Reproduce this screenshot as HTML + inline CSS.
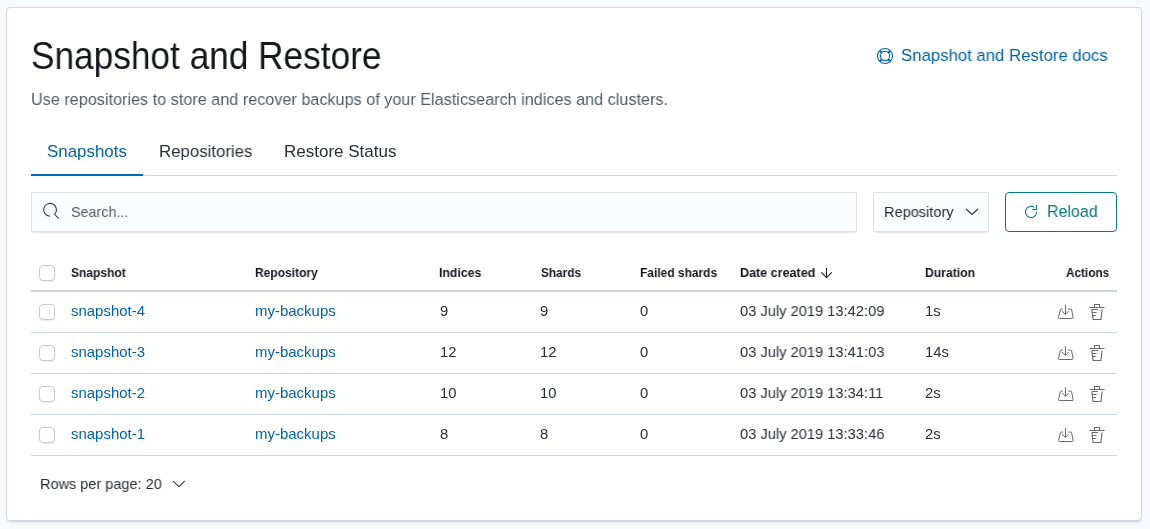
<!DOCTYPE html>
<html><head><meta charset="utf-8"><style>
html,body{margin:0;padding:0;}
body{width:1150px;height:529px;background:#F7F9FD;position:relative;overflow:hidden;font-family:"Liberation Sans",sans-serif;}
.panel{position:absolute;left:6px;top:7px;width:1134px;height:512px;background:#fff;border:1px solid #CFD7E4;border-radius:4px;box-shadow:0 1px 2px -1px rgba(152,162,179,.4),0 3px 3px -2px rgba(152,162,179,.4);}
.t{position:absolute;white-space:nowrap;line-height:40px;height:40px;transform-origin:0 0;will-change:transform;}
.cb{position:absolute;left:39px;width:14px;height:14px;border:1px solid #C9CBCD;border-radius:4px;background:#fff;box-shadow:0 1px 1px rgba(0,0,0,.08);}
.hl{position:absolute;left:31px;width:1086px;height:1px;background:#CFD7E4;}
.ic{position:absolute;}
.field{position:absolute;background:#FBFCFD;box-shadow:inset 0 0 0 1px rgba(0,0,0,.1),0 1px 1px -1px rgba(0,0,0,.1),0 3px 2px -2px rgba(0,0,0,.1);}
</style></head><body>
<div class="panel"></div>
<div class="hl" style="top:175px"></div>
<div style="position:absolute;left:31px;top:174px;width:112px;height:2px;background:#006BB4"></div>
<div class="field" style="left:31px;top:192px;width:826px;height:40px"></div>
<svg class="ic" style="left:42px;top:202px" width="18" height="18" viewBox="0 0 18 18"><path d="M8.05 14.2A6.4 6.4 0 1 1 12.58 12.33L16.9 16.65" fill="none" stroke="#343741" stroke-width="1.05"/></svg>
<div class="field" style="left:873px;top:192px;width:116px;height:40px"></div>
<svg class="ic" style="left:965px;top:208px" width="14" height="8" viewBox="0 0 14 8"><path d="M1 1l6 5.5L13 1" fill="none" stroke="#343741" stroke-width="1.2"/></svg>
<div style="position:absolute;left:1005px;top:192px;width:110px;height:38px;border:1px solid #017D73;border-radius:4px"></div>
<svg class="ic" style="left:1023px;top:204px" width="16" height="16" viewBox="0 0 16 16"><path d="M13.6 7.6A5.6 5.6 0 1 1 11.37 3.43" fill="none" stroke="#017D73" stroke-width="1.05"/><path d="M13.4 1v4.5H9.3" fill="none" stroke="#017D73" stroke-width="1.05"/></svg>
<svg class="ic" style="left:876px;top:47px" width="18" height="18" viewBox="0 0 18 18"><circle cx="9" cy="9" r="7.5" fill="none" stroke="#006BB4" stroke-width="1.1"/><circle cx="9" cy="9" r="4.6" fill="none" stroke="#006BB4" stroke-width="1.1"/><path d="M3.7 3.7l2.1 2.1M14.3 3.7l-2.1 2.1M3.7 14.3l2.1-2.1M14.3 14.3l-2.1-2.1" stroke="#006BB4" stroke-width="2"/></svg>
<div style="position:absolute;left:31px;top:290px;width:1086px;height:2px;background:#CDD5E2"></div>
<div class="hl" style="top:332px"></div>
<div class="hl" style="top:373px"></div>
<div class="hl" style="top:414px"></div>
<div class="hl" style="top:455px"></div>
<div class="cb" style="top:265px"></div>
<div class="cb" style="top:304px"></div>
<div class="cb" style="top:345px"></div>
<div class="cb" style="top:386px"></div>
<div class="cb" style="top:427px"></div>
<svg class="ic" style="left:1058px;top:304px" width="16" height="16" viewBox="0 0 16 16"><path d="M7.45 1.1v9.3M4.2 7.1l3.25 3.3 3.25-3.3" fill="none" stroke="#6A6A6A" stroke-width="1" stroke-linejoin="round"/><path d="M4.8 5.1H3.1a0.7 0.7 0 0 0-0.7 0.6L0.5 13.4a1 1 0 0 0 1 1.1h12.6a1 1 0 0 0 1-1.1L13.6 5.7a0.7 0.7 0 0 0-0.7-0.6H10.2" fill="none" stroke="#6A6A6A" stroke-width="1" stroke-linejoin="round"/></svg>
<svg class="ic" style="left:1089px;top:304px" width="16" height="16" viewBox="0 0 16 16"><path d="M0.5 3.5h15M5.5 3.5v-3h5v3M2.8 5.5l1.3 10h7.8l1.2-10M3 5.5h6M3.5 8.5h4M3.8 11.5h3" fill="none" stroke="#6A6A6A" stroke-width="1.1"/></svg>
<svg class="ic" style="left:1058px;top:345px" width="16" height="16" viewBox="0 0 16 16"><path d="M7.45 1.1v9.3M4.2 7.1l3.25 3.3 3.25-3.3" fill="none" stroke="#6A6A6A" stroke-width="1" stroke-linejoin="round"/><path d="M4.8 5.1H3.1a0.7 0.7 0 0 0-0.7 0.6L0.5 13.4a1 1 0 0 0 1 1.1h12.6a1 1 0 0 0 1-1.1L13.6 5.7a0.7 0.7 0 0 0-0.7-0.6H10.2" fill="none" stroke="#6A6A6A" stroke-width="1" stroke-linejoin="round"/></svg>
<svg class="ic" style="left:1089px;top:345px" width="16" height="16" viewBox="0 0 16 16"><path d="M0.5 3.5h15M5.5 3.5v-3h5v3M2.8 5.5l1.3 10h7.8l1.2-10M3 5.5h6M3.5 8.5h4M3.8 11.5h3" fill="none" stroke="#6A6A6A" stroke-width="1.1"/></svg>
<svg class="ic" style="left:1058px;top:386px" width="16" height="16" viewBox="0 0 16 16"><path d="M7.45 1.1v9.3M4.2 7.1l3.25 3.3 3.25-3.3" fill="none" stroke="#6A6A6A" stroke-width="1" stroke-linejoin="round"/><path d="M4.8 5.1H3.1a0.7 0.7 0 0 0-0.7 0.6L0.5 13.4a1 1 0 0 0 1 1.1h12.6a1 1 0 0 0 1-1.1L13.6 5.7a0.7 0.7 0 0 0-0.7-0.6H10.2" fill="none" stroke="#6A6A6A" stroke-width="1" stroke-linejoin="round"/></svg>
<svg class="ic" style="left:1089px;top:386px" width="16" height="16" viewBox="0 0 16 16"><path d="M0.5 3.5h15M5.5 3.5v-3h5v3M2.8 5.5l1.3 10h7.8l1.2-10M3 5.5h6M3.5 8.5h4M3.8 11.5h3" fill="none" stroke="#6A6A6A" stroke-width="1.1"/></svg>
<svg class="ic" style="left:1058px;top:427px" width="16" height="16" viewBox="0 0 16 16"><path d="M7.45 1.1v9.3M4.2 7.1l3.25 3.3 3.25-3.3" fill="none" stroke="#6A6A6A" stroke-width="1" stroke-linejoin="round"/><path d="M4.8 5.1H3.1a0.7 0.7 0 0 0-0.7 0.6L0.5 13.4a1 1 0 0 0 1 1.1h12.6a1 1 0 0 0 1-1.1L13.6 5.7a0.7 0.7 0 0 0-0.7-0.6H10.2" fill="none" stroke="#6A6A6A" stroke-width="1" stroke-linejoin="round"/></svg>
<svg class="ic" style="left:1089px;top:427px" width="16" height="16" viewBox="0 0 16 16"><path d="M0.5 3.5h15M5.5 3.5v-3h5v3M2.8 5.5l1.3 10h7.8l1.2-10M3 5.5h6M3.5 8.5h4M3.8 11.5h3" fill="none" stroke="#6A6A6A" stroke-width="1.1"/></svg>

<svg class="ic" style="left:820px;top:267px" width="14" height="12" viewBox="0 0 14 12"><path d="M6.5 1v9.6M1.2 5.3l5.3 5.3 5.3-5.3" fill="none" stroke="#1a1c21" stroke-width="1.05"/></svg>
<svg class="ic" style="left:171px;top:480px" width="16" height="9" viewBox="0 0 16 9"><path d="M2.3 1.4L8 6.6l5.4-5.2" fill="none" stroke="#343741" stroke-width="1.1" stroke-linecap="round" stroke-linejoin="round"/></svg>
<div class="t" style="left:31.37px;top:35.50px;font-size:38.5px;color:#15171b;font-weight:400;transform:scaleX(0.9147);">Snapshot and Restore</div>
<div class="t" style="left:31.04px;top:79.50px;font-size:16.9px;color:#555B66;font-weight:400;transform:scaleX(0.9598);">Use repositories to store and recover backups of your Elasticsearch indices and clusters.</div>
<div class="t" style="left:901.21px;top:35.50px;font-size:16.9px;color:#0063AD;font-weight:400;transform:scaleX(0.9918);">Snapshot and Restore docs</div>
<div class="t" style="left:46.90px;top:131.50px;font-size:16.9px;color:#0063AD;font-weight:400;transform:scaleX(1.0013);">Snapshots</div>
<div class="t" style="left:158.51px;top:131.50px;font-size:16.9px;color:#2B2E36;font-weight:400;transform:scaleX(0.9946);">Repositories</div>
<div class="t" style="left:284.29px;top:131.50px;font-size:16.9px;color:#2B2E36;font-weight:400;transform:scaleX(1.0064);">Restore Status</div>
<div class="t" style="left:70.83px;top:192.00px;font-size:14.8px;color:#555B66;font-weight:400;transform:scaleX(0.9684);">Search...</div>
<div class="t" style="left:883.72px;top:192.00px;font-size:14.8px;color:#2B2E36;font-weight:400;transform:scaleX(0.9843);">Repository</div>
<div class="t" style="left:1047.25px;top:191.50px;font-size:16.9px;color:#017D73;font-weight:400;transform:scaleX(0.9462);">Reload</div>
<div class="t" style="left:71.45px;top:252.50px;font-size:12.8px;color:#15171b;font-weight:700;transform:scaleX(0.9388);">Snapshot</div>
<div class="t" style="left:254.71px;top:252.50px;font-size:12.8px;color:#15171b;font-weight:700;transform:scaleX(0.9386);">Repository</div>
<div class="t" style="left:439.44px;top:252.50px;font-size:12.8px;color:#15171b;font-weight:700;transform:scaleX(0.9605);">Indices</div>
<div class="t" style="left:540.60px;top:252.50px;font-size:12.8px;color:#15171b;font-weight:700;transform:scaleX(0.9233);">Shards</div>
<div class="t" style="left:640.07px;top:252.50px;font-size:12.8px;color:#15171b;font-weight:700;transform:scaleX(0.9346);">Failed shards</div>
<div class="t" style="left:739.52px;top:252.50px;font-size:12.8px;color:#15171b;font-weight:700;transform:scaleX(0.98);">Date created</div>
<div class="t" style="left:924.95px;top:252.50px;font-size:12.8px;color:#15171b;font-weight:700;transform:scaleX(0.951);">Duration</div>
<div class="t" style="left:1065.50px;top:252.50px;font-size:12.8px;color:#15171b;font-weight:700;transform:scaleX(0.9213);">Actions</div>
<div class="t" style="left:71.20px;top:291.00px;font-size:14.8px;color:#0063AD;font-weight:400;transform:scaleX(1.011);">snapshot-4</div>
<div class="t" style="left:254.59px;top:291.00px;font-size:14.8px;color:#0063AD;font-weight:400;transform:scaleX(1.012);">my-backups</div>
<div class="t" style="left:439.60px;top:291.00px;font-size:14.8px;color:#2B2E36;font-weight:400;transform:scaleX(1.0);">9</div>
<div class="t" style="left:539.60px;top:291.00px;font-size:14.8px;color:#2B2E36;font-weight:400;transform:scaleX(1.0);">9</div>
<div class="t" style="left:639.60px;top:291.00px;font-size:14.8px;color:#2B2E36;font-weight:400;transform:scaleX(1.0);">0</div>
<div class="t" style="left:739.70px;top:291.00px;font-size:14.8px;color:#2B2E36;font-weight:400;transform:scaleX(0.991);">03 July 2019 13:42:09</div>
<div class="t" style="left:924.90px;top:291.00px;font-size:14.8px;color:#2B2E36;font-weight:400;transform:scaleX(1.0);">1s</div>
<div class="t" style="left:71.20px;top:332.00px;font-size:14.8px;color:#0063AD;font-weight:400;transform:scaleX(1.011);">snapshot-3</div>
<div class="t" style="left:254.59px;top:332.00px;font-size:14.8px;color:#0063AD;font-weight:400;transform:scaleX(1.012);">my-backups</div>
<div class="t" style="left:439.60px;top:332.00px;font-size:14.8px;color:#2B2E36;font-weight:400;transform:scaleX(1.0);">12</div>
<div class="t" style="left:539.60px;top:332.00px;font-size:14.8px;color:#2B2E36;font-weight:400;transform:scaleX(1.0);">12</div>
<div class="t" style="left:639.60px;top:332.00px;font-size:14.8px;color:#2B2E36;font-weight:400;transform:scaleX(1.0);">0</div>
<div class="t" style="left:739.70px;top:332.00px;font-size:14.8px;color:#2B2E36;font-weight:400;transform:scaleX(0.991);">03 July 2019 13:41:03</div>
<div class="t" style="left:924.90px;top:332.00px;font-size:14.8px;color:#2B2E36;font-weight:400;transform:scaleX(1.0);">14s</div>
<div class="t" style="left:71.20px;top:373.00px;font-size:14.8px;color:#0063AD;font-weight:400;transform:scaleX(1.011);">snapshot-2</div>
<div class="t" style="left:254.59px;top:373.00px;font-size:14.8px;color:#0063AD;font-weight:400;transform:scaleX(1.012);">my-backups</div>
<div class="t" style="left:439.60px;top:373.00px;font-size:14.8px;color:#2B2E36;font-weight:400;transform:scaleX(1.0);">10</div>
<div class="t" style="left:539.60px;top:373.00px;font-size:14.8px;color:#2B2E36;font-weight:400;transform:scaleX(1.0);">10</div>
<div class="t" style="left:639.60px;top:373.00px;font-size:14.8px;color:#2B2E36;font-weight:400;transform:scaleX(1.0);">0</div>
<div class="t" style="left:739.70px;top:373.00px;font-size:14.8px;color:#2B2E36;font-weight:400;transform:scaleX(0.991);">03 July 2019 13:34:11</div>
<div class="t" style="left:924.90px;top:373.00px;font-size:14.8px;color:#2B2E36;font-weight:400;transform:scaleX(1.0);">2s</div>
<div class="t" style="left:71.20px;top:414.00px;font-size:14.8px;color:#0063AD;font-weight:400;transform:scaleX(1.011);">snapshot-1</div>
<div class="t" style="left:254.59px;top:414.00px;font-size:14.8px;color:#0063AD;font-weight:400;transform:scaleX(1.012);">my-backups</div>
<div class="t" style="left:439.60px;top:414.00px;font-size:14.8px;color:#2B2E36;font-weight:400;transform:scaleX(1.0);">8</div>
<div class="t" style="left:539.60px;top:414.00px;font-size:14.8px;color:#2B2E36;font-weight:400;transform:scaleX(1.0);">8</div>
<div class="t" style="left:639.60px;top:414.00px;font-size:14.8px;color:#2B2E36;font-weight:400;transform:scaleX(1.0);">0</div>
<div class="t" style="left:739.70px;top:414.00px;font-size:14.8px;color:#2B2E36;font-weight:400;transform:scaleX(0.991);">03 July 2019 13:33:46</div>
<div class="t" style="left:924.90px;top:414.00px;font-size:14.8px;color:#2B2E36;font-weight:400;transform:scaleX(1.0);">2s</div>
<div class="t" style="left:40.02px;top:464.00px;font-size:14.8px;color:#2B2E36;font-weight:400;transform:scaleX(0.9805);">Rows per page: 20</div>

</body></html>
